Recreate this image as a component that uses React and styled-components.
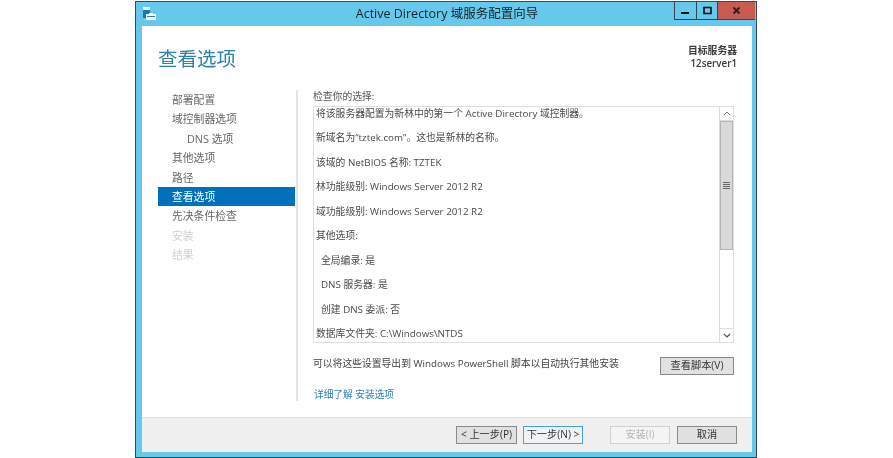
import React from 'react'
import styled, { createGlobalStyle } from 'styled-components'

const Global = createGlobalStyle`
  html, body { margin: 0; padding: 0; background: #fff; }
  body {
    font-family: "Open Sans", "Noto Sans CJK SC", sans-serif;
    font-size: 10px;
    color: #444;
  }
`

const Page = styled.div`
  width: 893px;
  height: 458px;
  padding-left: 135px;
  box-sizing: border-box;
  overflow: hidden;
`

const Win = styled.div`
  width: 622px;
  height: 457px;
  margin-top: 1px;
  box-sizing: border-box;
  border: 1px solid #3a4a52;
  background: #66c9ec;
  display: flex;
  flex-direction: column;
  padding: 0 4px 5px 6px;
  filter: blur(0.35px);
`

const TitleBar = styled.div`
  height: 24px;
  flex: none;
  display: flex;
  align-items: flex-start;
  position: relative;
`

const AppIcon = styled.svg`
  width: 14px;
  height: 15px;
  margin: 4px 0 0 0;
`

const Title = styled.div`
  position: absolute;
  left: 0;
  right: 0;
  top: 4px;
  text-align: center;
  font-size: 12.5px;
  line-height: 16px;
  color: #14222b;
`

const WinButtons = styled.div`
  position: absolute;
  right: -3px;
  top: 0;
  display: flex;
  height: 18px;
`

const WinBtn = styled.div`
  width: ${p => p.$w}px;
  box-sizing: border-box;
  border: 1px solid #34474f;
  border-top: none;
  border-left-width: ${p => (p.$first ? 1 : 0)}px;
  border-right-width: ${p => (p.$close ? 0 : 1)}px;
  background: ${p => (p.$close ? '#c75b50' : 'transparent')};
  display: flex;
  align-items: center;
  justify-content: center;
`

const Body = styled.div`
  flex: 1;
  min-height: 0;
  background: #fff;
  display: flex;
  flex-direction: column;
`

const Main = styled.div`
  flex: 1;
  min-height: 0;
  padding: 0 15px 0 16px;
`

const Header = styled.div`
  height: 64px;
  display: flex;
  justify-content: space-between;
`

const Heading = styled.h1`
  margin: 18px 0 0;
  font-size: 19.5px;
  line-height: 27px;
  font-weight: 400;
  color: #2a82a8;
  font-family: "Noto Sans CJK SC", sans-serif;
`

const Target = styled.div`
  margin-top: 18px;
  text-align: right;
  font-size: 9.8px;
  line-height: 13px;
  font-weight: 600;
  color: #3b3b3b;
`

const Columns = styled.div`
  display: flex;
  align-items: flex-start;
`

const Nav = styled.div`
  width: 137px;
  flex: none;
`

const NavItem = styled.div`
  height: 19.4px;
  line-height: 19px;
  padding-left: ${p => (p.$sub ? 29 : 14)}px;
  font-size: 10.8px;
  white-space: nowrap;
  color: ${p => (p.$active ? '#fff' : p.$off ? '#cfcfcf' : '#666')};
  background: ${p => (p.$active ? '#0070bb' : 'transparent')};
`

const Right = styled.div`
  flex: none;
  width: 436px;
  height: 311px;
  margin-left: 1px;
  padding-left: 15px;
  border-left: 2px solid #e4e4e4;
  box-sizing: border-box;
`

const Label = styled.div`
  height: 16px;
  line-height: 13px;
  font-size: 9.8px;
  color: #555;
`

const Box = styled.div`
  width: 421px;
  height: 237px;
  box-sizing: border-box;
  border: 1px solid #dcdfe6;
  display: flex;
`

const Lines = styled.div`
  flex: 1;
  padding: 0 0 0 2px;
  overflow: hidden;
`

const Line = styled.div`
  height: 24.45px;
  line-height: 13px;
  padding-left: ${p => (p.$in ? 5 : 0)}px;
  font-size: 9.8px;
  white-space: nowrap;
  color: #4a4a4a;
`

const Scroll = styled.div`
  width: 14px;
  flex: none;
  display: flex;
  flex-direction: column;
  border-left: 1px solid #dcdcdc;
  box-sizing: border-box;
`

const Arrow = styled.div`
  height: 14px;
  flex: none;
  display: flex;
  align-items: center;
  justify-content: center;
  border-bottom: ${p => (p.$up ? '1px solid #dcdcdc' : 'none')};
  border-top: ${p => (p.$up ? 'none' : '1px solid #dcdcdc')};
  box-sizing: border-box;
`

const Thumb = styled.div`
  height: 129px;
  flex: none;
  box-sizing: border-box;
  background: #d9d9d9;
  border: 1px solid #b4b4b4;
  display: flex;
  align-items: center;
  justify-content: center;
`

const Track = styled.div`
  flex: 1;
`

const ExportRow = styled.div`
  display: flex;
  justify-content: space-between;
  align-items: flex-start;
  margin-top: 14px;
  width: 421px;
`

const ExportText = styled.div`
  font-size: 9.8px;
  line-height: 13px;
  white-space: nowrap;
  color: #444;
`

const Btn = styled.div`
  width: ${p => p.$w || 60}px;
  height: 18px;
  box-sizing: border-box;
  line-height: 15px;
  text-align: center;
  font-size: 10.2px;
  white-space: nowrap;
  background: ${p => (p.$primary ? '#f0f4f7' : p.$off ? '#f4f4f4' : '#e1e1e1')};
  border: 1px solid ${p => (p.$off ? '#d0d0d0' : p.$primary ? '#4a9fe6' : '#8a8a8a')};
  color: ${p => (p.$off ? '#b5b5b5' : '#333')};
`

const LearnMore = styled.div`
  margin: 13px 0 0 1px;
  font-size: 9.7px;
  line-height: 13px;
  color: #2f7db8;
`

const Footer = styled.div`
  height: 35px;
  flex: none;
  box-sizing: border-box;
  background: #f0f0f0;
  border-top: 1px solid #dfdfdf;
  display: flex;
  align-items: flex-start;
  padding: 8px 15px 0 0;
  justify-content: flex-end;
`

const Gap = styled.div`
  width: ${p => p.$w}px;
  flex: none;
`

const steps = [
  { t: '部署配置' },
  { t: '域控制器选项' },
  { t: 'DNS 选项', sub: true },
  { t: '其他选项' },
  { t: '路径' },
  { t: '查看选项', active: true },
  { t: '先决条件检查' },
  { t: '安装', off: true },
  { t: '结果', off: true },
]

const summary = [
  { t: '将该服务器配置为新林中的第一个 Active Directory 域控制器。' },
  { t: '新域名为“tztek.com”。这也是新林的名称。' },
  { t: '该域的 NetBIOS 名称: TZTEK' },
  { t: '林功能级别: Windows Server 2012 R2' },
  { t: '域功能级别: Windows Server 2012 R2' },
  { t: '其他选项:' },
  { t: '全局编录: 是', indent: true },
  { t: 'DNS 服务器: 是', indent: true },
  { t: '创建 DNS 委派: 否', indent: true },
  { t: '数据库文件夹: C:\\Windows\\NTDS' },
]

export default function App() {
  return (
    <Page>
      <Global />
      <Win>
        <TitleBar>
          <AppIcon viewBox="0 0 14 15">
            <rect x="1" y="1" width="7" height="3" fill="#eaf6fb" />
            <rect x="1" y="4" width="7" height="8" fill="#1c74b4" />
            <rect x="4" y="8" width="10" height="6" fill="#f4fbfe" />
            <rect x="7" y="7" width="4" height="1" fill="#f4fbfe" />
            <rect x="5" y="10" width="8" height="1" fill="#3c7fa3" />
          </AppIcon>
          <Title>Active Directory 域服务配置向导</Title>
          <WinButtons>
            <WinBtn $w={23} $first>
              <svg width="9" height="9" viewBox="0 0 9 9"><rect x="0" y="6" width="8" height="2" fill="#111" /></svg>
            </WinBtn>
            <WinBtn $w={21}>
              <svg width="9" height="9" viewBox="0 0 9 9"><rect x="1" y="1.5" width="7" height="6" fill="none" stroke="#111" strokeWidth="1.6" /></svg>
            </WinBtn>
            <WinBtn $w={37} $close>
              <svg width="9" height="9" viewBox="0 0 9 9"><path d="M1.5 1.5 7.5 7.5M7.5 1.5 1.5 7.5" stroke="#222" strokeWidth="1.8" /></svg>
            </WinBtn>
          </WinButtons>
        </TitleBar>
        <Body>
          <Main>
            <Header>
              <Heading>查看选项</Heading>
              <Target>目标服务器<br />12server1</Target>
            </Header>
            <Columns>
              <Nav>
                {steps.map(s => (
                  <NavItem key={s.t} $sub={s.sub} $active={s.active} $off={s.off}>{s.t}</NavItem>
                ))}
              </Nav>
              <Right>
                <Label>检查你的选择:</Label>
                <Box>
                  <Lines>
                    {summary.map(l => (
                      <Line key={l.t} $in={l.indent}>{l.t}</Line>
                    ))}
                  </Lines>
                  <Scroll>
                    <Arrow $up>
                      <svg width="8" height="5" viewBox="0 0 8 5"><path d="M1 4 4 1l3 3" fill="none" stroke="#777" strokeWidth="1" /></svg>
                    </Arrow>
                    <Thumb>
                      <svg width="7" height="7" viewBox="0 0 7 7"><path d="M0 .5h7M0 2.5h7M0 4.500h7M0 6.500h7" stroke="#666" strokeWidth="1" /></svg>
                    </Thumb>
                    <Track />
                    <Arrow>
                      <svg width="8" height="5" viewBox="0 0 8 5"><path d="M1 1l3 3 3-3" fill="none" stroke="#555" strokeWidth="1.2" /></svg>
                    </Arrow>
                  </Scroll>
                </Box>
                <ExportRow>
                  <ExportText>可以将这些设置导出到 Windows PowerShell 脚本以自动执行其他安装</ExportText>
                  <Btn $w={74}>查看脚本(V)</Btn>
                </ExportRow>
                <LearnMore>详细了解 安装选项</LearnMore>
              </Right>
            </Columns>
          </Main>
          <Footer>
            <Btn $w={61}>&lt; 上一步(P)</Btn>
            <Gap $w={6} />
            <Btn $w={60} $primary>下一步(N) &gt;</Btn>
            <Gap $w={27} />
            <Btn $off>安装(I)</Btn>
            <Gap $w={7} />
            <Btn>取消</Btn>
          </Footer>
        </Body>
      </Win>
    </Page>
  )
}
